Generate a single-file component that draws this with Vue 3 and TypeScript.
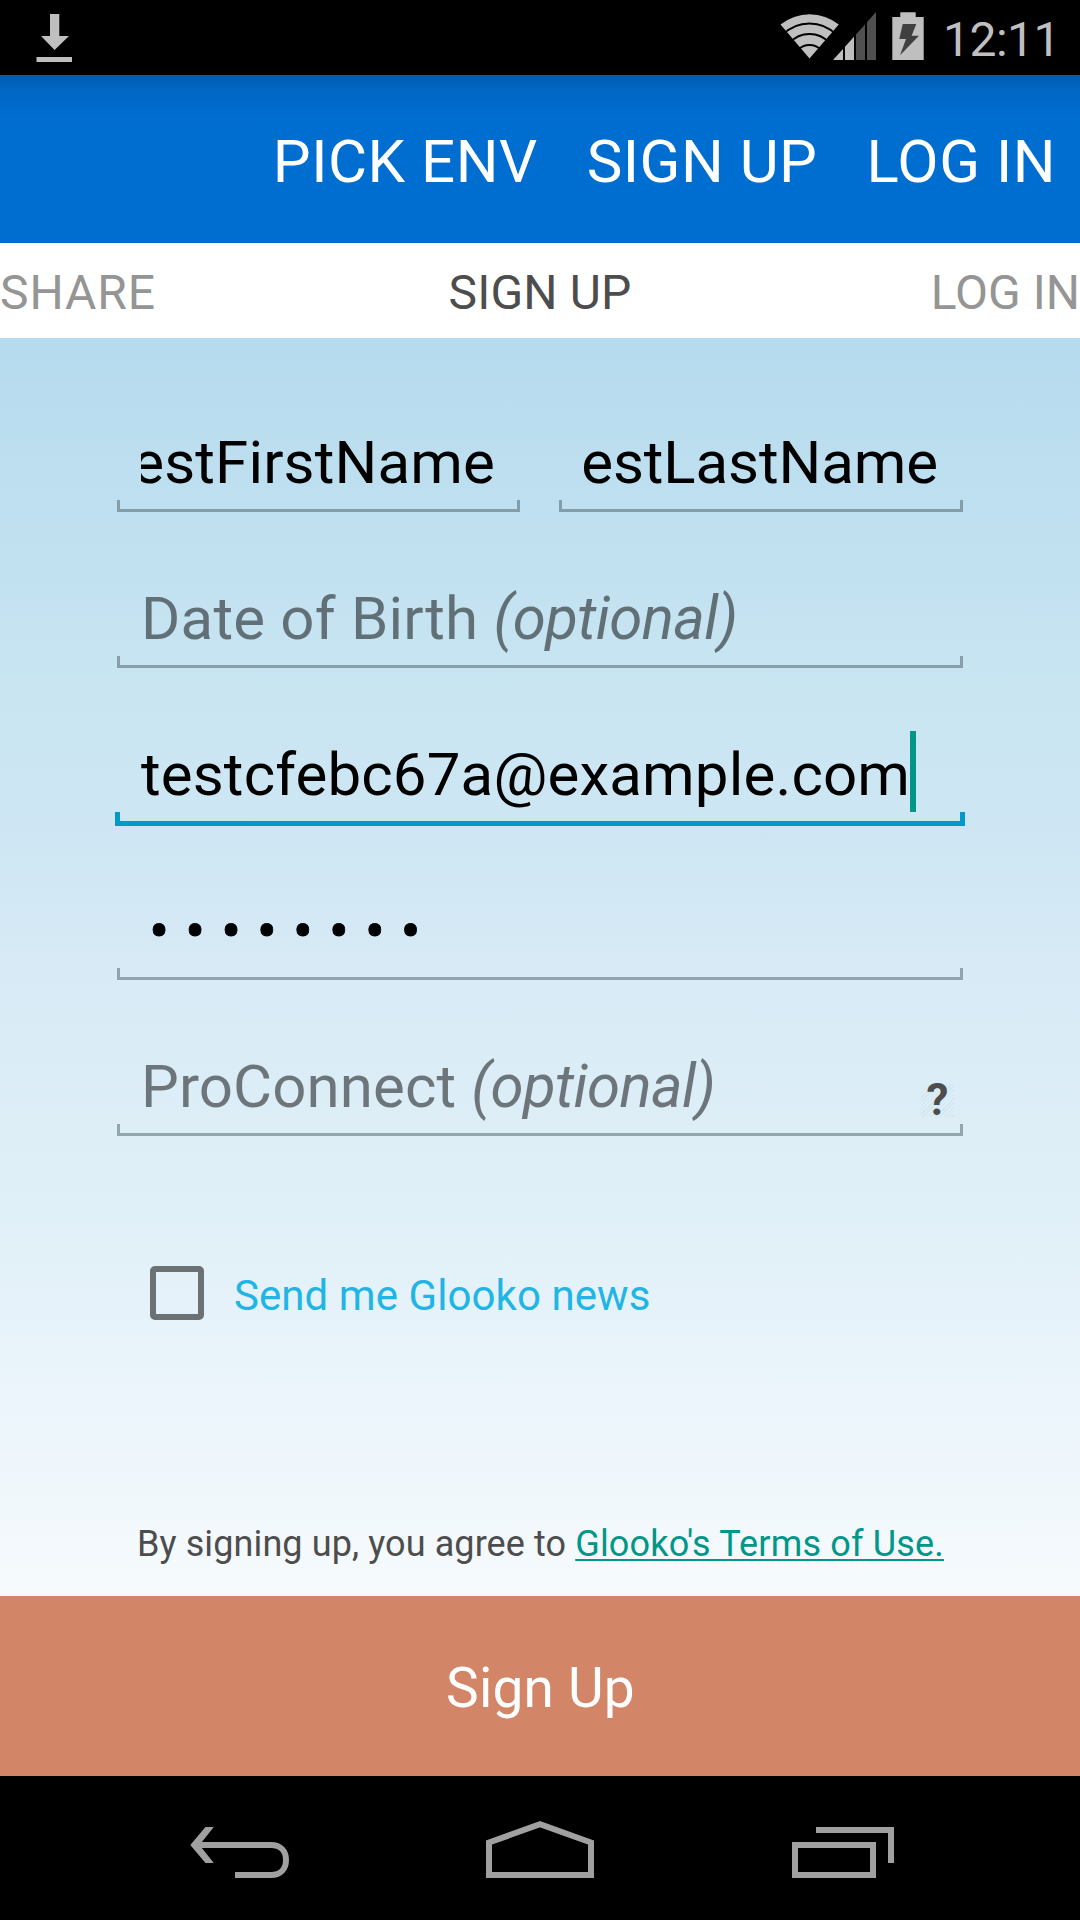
<script setup lang="ts">
import { ref } from 'vue'

interface OptionalField {
  label: string
  hint: string
}

const menu = ['PICK ENV', 'SIGN UP', 'LOG IN']
const tabs = ['SHARE', 'SIGN UP', 'LOG IN']
const firstName = 'TestFirstName'
const lastName = 'TestLastName'
const email = 'testcfebc67a@example.com'
const maskedPassword = '•'.repeat(8)
const birth: OptionalField = { label: 'Date of Birth', hint: '(optional)' }
const proConnect: OptionalField = { label: 'ProConnect', hint: '(optional)' }
const news = ref(false)
</script>

<template>
  <div class="screen">
    <header class="status">
      <svg class="download" width="36" height="48" viewBox="0 0 36 48" fill="#bfbfbf">
        <path d="M14 0h9.3v22H33L18.600 36 5 22h9zM.5 43H36v5H.5z" />
      </svg>
      <div class="status-right">
        <svg class="wifi" width="60" height="48" viewBox="780 12 60 48">
          <path d="M809.500 58.500 780.500 24.500A47 47 0 0 1 838.800 24.500Z" fill="#bfbfbf" />
          <g fill="none" stroke="#000" stroke-width="2">
            <path d="M783 34.500A37.500 37.500 0 0 1 836 34.500" />
            <path d="M789.500 43A26.700 26.700 0 0 1 829.500 43" />
            <path d="M797.500 50.500A16 16 0 0 1 821.500 50.500" />
          </g>
        </svg>
        <svg class="signal" width="44" height="48" viewBox="833 12 44 48">
          <path d="M833 60 843 49V60ZM845 46.700 854 36.700V60H845Z" fill="#bfbfbf" />
          <path d="M856 34.500 865 24.500V60H856ZM867 22.300 876 12V60H867Z" fill="#505050" />
        </svg>
        <svg class="battery" width="32" height="48" viewBox="892 12 32 48">
          <path d="M900.300 12.300H915.700V17H923.700V60H892.300V17H900.300Z" fill="#bfbfbf" />
          <path d="M902.700 24H916.300L911.600 35.700H919L900 55.300 906 39H899.300Z" fill="#404040" />
        </svg>
        <span class="clock">12:11</span>
      </div>
    </header>

    <nav class="actions">
      <span v-for="m in menu" :key="m" class="action">{{ m }}</span>
    </nav>

    <div class="tabs">
      <span v-for="(t, i) in tabs" :key="t" :class="['tab', { current: i === 1 }]">{{ t }}</span>
    </div>

    <main class="form">
      <div class="row">
        <div class="field half">
          <div class="value scrolled first"><span>{{ firstName }}</span></div>
          <div class="bracket"></div>
        </div>
        <div class="field half">
          <div class="value scrolled last"><span>{{ lastName }}</span></div>
          <div class="bracket"></div>
        </div>
      </div>
      <div class="field">
        <div class="value hint"><span>{{ birth.label }} <i>{{ birth.hint }}</i></span></div>
        <div class="bracket"></div>
      </div>
      <div class="field focused">
        <div class="value"><span class="email">{{ email }}</span><span class="caret"></span></div>
        <div class="bracket"></div>
      </div>
      <div class="field">
        <div class="value"><span class="dots">{{ maskedPassword }}</span></div>
        <div class="bracket"></div>
      </div>
      <div class="field">
        <div class="value hint pro"><span>{{ proConnect.label }} <i>{{ proConnect.hint }}</i></span></div>
        <div class="bracket"></div>
        <span class="help">?</span>
      </div>

      <div class="check" @click="news = !news">
        <span class="box"></span>
        <span class="check-label">Send me Glooko news</span>
      </div>

      <p class="terms"><span class="agree">By signing up, you agree to </span><a>Glooko's Terms of Use.</a></p>
    </main>

    <button class="submit"><span>Sign Up</span></button>

    <footer class="nav">
      <svg width="100" height="58" viewBox="190 1821 100 58" fill="none" stroke="#a0a0a0" stroke-width="6">
        <path d="M198 1845H271C281 1845 286 1851.500 286 1860C286 1868.500 281 1875 271 1875H235" />
        <path d="M190.300 1845 205.500 1827H213.800L199.500 1845 213.800 1863H205.500Z" fill="#a0a0a0" stroke="none" />
      </svg>
      <svg class="home" width="108" height="58" viewBox="486 1821 108 58" fill="none" stroke="#a0a0a0" stroke-width="6">
        <path d="M489 1842.500 540 1824.200 591 1842.500V1875H489Z" />
      </svg>
      <svg width="102" height="58" viewBox="792 1821 102 58" fill="none" stroke="#a0a0a0" stroke-width="6">
        <path d="M795 1845H873V1875H795ZM816 1830H891V1863" />
      </svg>
    </footer>
  </div>
</template>

<style>
body {
  margin: 0;
  background: #000;
}
</style>

<style scoped>
.screen {
  width: 1080px;
  height: 1920px;
  display: flex;
  flex-direction: column;
  overflow: hidden;
  font-family: Roboto, 'Noto Sans', sans-serif;
  white-space: nowrap;
}
svg {
  display: block;
  flex: none;
}
.status {
  height: 75px;
  flex: none;
  box-sizing: border-box;
  background: #000;
  display: flex;
  justify-content: space-between;
  padding: 0 22px 0 36px;
}
.download {
  margin-top: 14px;
}
.status-right {
  display: flex;
  width: 278px;
}
.status-right svg {
  margin-top: 12px;
}
.signal {
  margin-left: -7px;
}
.battery {
  margin-left: 15px;
}
.clock {
  margin-left: 19px;
  font-size: 48px;
  line-height: 79px;
  letter-spacing: -0.5px;
  color: #bfbfbf;
}
.actions {
  height: 168px;
  flex: none;
  box-sizing: border-box;
  display: flex;
  justify-content: flex-end;
  padding-right: 24px;
  background: linear-gradient(#005cb0 0, #0067c5 16px, #006dd0 42px, #006dd0 165px, #0069c6 168px);
  color: #fff;
  font-size: 60px;
  line-height: 173px;
  letter-spacing: 0.5px;
}
.action + .action {
  margin-left: 49px;
}
.tabs {
  height: 95px;
  flex: none;
  display: grid;
  grid-template-columns: 1fr auto 1fr;
  background: #fff;
  color: #959595;
  font-size: 48px;
  line-height: 99px;
}
.tab:first-child {
  letter-spacing: 0.9px;
}
.tab:last-child {
  text-align: right;
}
.tab.current {
  color: #4d4d4d;
  letter-spacing: 0.15px;
}
.form {
  height: 1258px;
  flex: none;
  box-sizing: border-box;
  padding: 84px 117px 0;
  background: linear-gradient(#b6dbee 0, #c9e5f2 29%, #d0e7f4 42%, #d9ebf6 52%, #deeff7 67%, #e8f3fa 80%, #f1f8fc 93%, #f6fafd 100%);
}
.row {
  display: flex;
  justify-content: space-between;
}
.field {
  position: relative;
  height: 90px;
  margin-bottom: 66px;
}
.half {
  width: 403px;
}
.half:last-child {
  width: 404px;
}
.value {
  height: 78px;
  margin: 0 24px;
  display: flex;
  font-size: 60px;
  line-height: 81px;
  color: #000;
}
.scrolled {
  height: 90px;
  margin: 0 25px -12px 24px;
  justify-content: flex-end;
  overflow: hidden;
}
.first {
  letter-spacing: 0.15px;
}
.last {
  letter-spacing: -0.1px;
}
.hint {
  opacity: 0.5;
  letter-spacing: 0.2px;
}
.hint i {
  letter-spacing: -0.65px;
}
.pro {
  letter-spacing: 0.1px;
}
.email {
  letter-spacing: 0.15px;
}
.dots {
  padding: 1px 0 0 8px;
  letter-spacing: 15.7px;
  -webkit-text-stroke: 0.8px #000;
}
.bracket {
  height: 12px;
  box-sizing: border-box;
  border: 3px solid rgba(62, 78, 84, 0.46);
  border-top: 0;
}
.focused .bracket {
  height: 14px;
  margin: 0 -2px;
  border-width: 5px;
  border-color: #0099cc;
  border-top: 0;
}
.caret {
  width: 6px;
  height: 81px;
  margin-top: -3px;
  background: #009688;
}
.help {
  position: absolute;
  right: 9px;
  bottom: 19px;
  width: 33px;
  height: 33px;
  background: repeating-linear-gradient(135deg, rgba(90, 130, 130, 0.07) 0 1px, transparent 1px 3px);
  color: #4d4d4d;
  font-size: 44px;
  font-weight: 700;
  line-height: 32px;
  text-align: center;
}
.check {
  display: flex;
  align-items: center;
  height: 54px;
  margin: 130px 0 0 33px;
}
.box {
  width: 54px;
  height: 54px;
  box-sizing: border-box;
  border: 6px solid #6c7174;
  border-radius: 5px;
}
.check-label {
  margin-left: 30px;
  padding-top: 5px;
  font-size: 42px;
  line-height: 60px;
  letter-spacing: 0.07px;
  color: #21b5e6;
}
.terms {
  margin: 203px 0 0 20px;
  font-size: 36px;
  line-height: 42px;
  letter-spacing: 0.1px;
  color: #4d4d4d;
  white-space: pre;
}
.terms a {
  color: #009688;
  letter-spacing: 0.17px;
  text-decoration: underline;
  text-decoration-thickness: 2px;
  text-underline-offset: 3px;
}
.submit {
  height: 180px;
  flex: none;
  border: 0;
  padding: 4px 0 0 1px;
  background: #d38568;
  color: #fff;
  font-family: inherit;
  font-size: 55px;
  letter-spacing: 0.2px;
}
.nav {
  height: 144px;
  flex: none;
  box-sizing: border-box;
  padding: 45px 0 0 190px;
  display: flex;
  background: #000;
}
.home {
  margin: 0 198px 0 196px;
}
</style>
